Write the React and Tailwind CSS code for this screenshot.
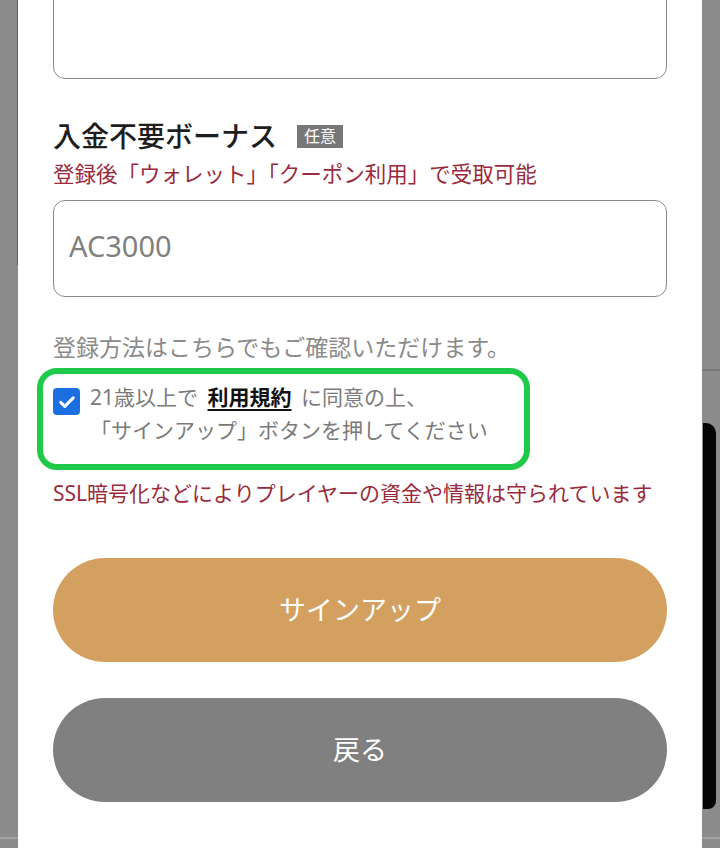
import { useState } from 'react';

const FONT = { fontFamily: '"Noto Sans", "Noto Sans CJK JP", sans-serif' };

function CheckIcon() {
  return (
    <svg viewBox="0 0 24 24" className="h-[20px] w-[20px]" fill="none">
      <path
        d="M4.5 12.5l4.8 4.8L19.5 7"
        stroke="white"
        strokeWidth="3.6"
        strokeLinecap="round"
        strokeLinejoin="round"
      />
    </svg>
  );
}

export default function App() {
  const [agreed, setAgreed] = useState(true);
  const [bonus, setBonus] = useState('');

  return (
    <div className="flex h-[848px] w-[720px] overflow-hidden bg-[#8c8c8c]" style={FONT}>
      {/* left backdrop strip */}
      <div className="flex w-[18px] shrink-0 flex-col">
        <div className="h-[265px] border-r border-[#5e5e5e]" />
        <div className="flex-1" />
        <div className="mb-[9px] h-[2px] bg-[#a3a3a3]" />
      </div>

      {/* modal */}
      <div className="flex w-[684px] shrink-0 flex-col bg-white px-[35px]">
        <textarea
          className="-mt-[41px] h-[120px] w-full shrink-0 resize-none rounded-[12px] border border-[#8a8a8a] outline-none"
          readOnly
        />

        <div className="mt-[40px] flex items-center gap-[20px]">
          <h2 className="text-[28px] leading-[35px] font-medium text-[#1e1e1e]">入金不要ボーナス</h2>
          <span className="bg-[#777] px-[7px] text-[16px] leading-[23px] text-white">任意</span>
        </div>
        <p className="mt-[6px] text-[21.5px] leading-[28px] text-[#9a2b3c]">
          登録後「ウォレット」「クーポン利用」で受取可能
        </p>

        <input
          value={bonus}
          onChange={(e) => setBonus(e.target.value)}
          placeholder="AC3000"
          className="mt-[12px] h-[97px] w-full shrink-0 rounded-[12px] border border-[#8a8a8a] px-[15px] pb-[6px] text-[29px] text-[#333] outline-none placeholder:text-[#808080]"
        />

        <p className="mt-[35px] text-[23px] leading-[30px] text-[#8a8a8a]">
          登録方法はこちらでもご確認いただけます。
        </p>

        <div className="-ml-[16px] mt-[6px] flex w-[493px] items-start gap-[10px] rounded-[20px] border-[6px] border-[#1fc94a] pb-[17px] pl-[10px] pt-[7px]">
          <span
            onClick={() => setAgreed(!agreed)}
            className={
              'mt-[7px] flex h-[27px] w-[27px] shrink-0 items-center justify-center rounded-[4px] ' +
              (agreed ? 'bg-[#1b6fe0]' : 'border-2 border-[#777] bg-white')
            }
          >
            {agreed && <CheckIcon />}
          </span>
          <p className="text-[21px] leading-[33px] text-[#7a7a7a]">
            21歳以上で{' '}
            <a className="mx-[4px] font-semibold text-[#111] underline decoration-2 underline-offset-[4px]">
              利用規約
            </a>{' '}
            に同意の上、
            <br />
            「サインアップ」ボタンを押してください
          </p>
        </div>

        <p className="mt-[9px] text-[21px] leading-[28px] text-[#9a2b3c]">
          SSL暗号化などによりプレイヤーの資金や情報は守られています
        </p>

        <button className="mt-[51px] h-[104px] w-full shrink-0 rounded-full bg-[#d4a060] text-[27px] text-white">
          サインアップ
        </button>
        <button className="mt-[36px] h-[104px] w-full shrink-0 rounded-full bg-[#808080] text-[27px] text-white">
          戻る
        </button>
      </div>

      {/* right backdrop strip */}
      <div className="flex flex-1 flex-col">
        <div className="h-[371px] border-b-2 border-[#767676]" />
        <div className="ml-[1px] mt-[52px] h-[386px] w-[13px] rounded-tr-[10px] rounded-br-[8px] bg-[#050505]" />
        <div className="flex-1" />
        <div className="mb-[9px] h-[2px] bg-[#a3a3a3]" />
      </div>
    </div>
  );
}
